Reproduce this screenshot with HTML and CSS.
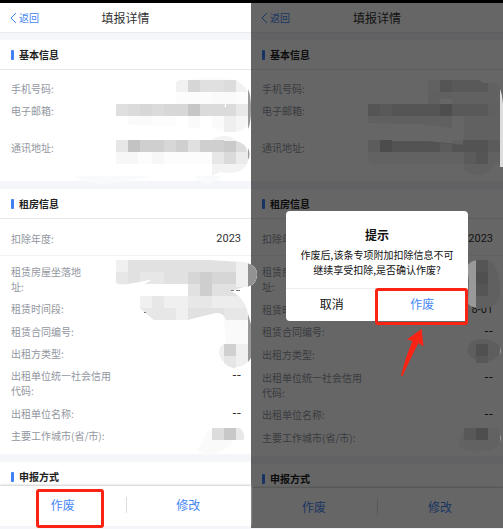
FILE: index.html
```html
<!DOCTYPE html>
<html lang="zh-CN">
<head>
<meta charset="utf-8">
<title>填报详情</title>
<link rel="stylesheet" href="styles.css">
</head>
<body>
<main class="board">
  <section class="phone phone-first">
    <header class="bar">
      <a class="back" href="#"><svg viewBox="0 0 7 12" aria-hidden="true"><path d="M6 1 1 6l5 5"/></svg>返回</a>
      <h1>填报详情</h1>
    </header>
    <section class="card">
      <h2>基本信息</h2>
      <dl class="rows">
        <div class="row"><dt>手机号码:</dt><dd></dd></div>
        <div class="row"><dt>电子邮箱:</dt><dd></dd></div>
        <div class="row row-address"><dt>通讯地址:</dt><dd></dd></div>
      </dl>
    </section>
    <section class="card card-rent">
      <h2>租房信息</h2>
      <dl class="rows rows-year">
        <div class="row"><dt>扣除年度:</dt><dd>2023</dd></div>
      </dl>
      <dl class="rows rows-rent">
        <div class="row"><dt>租赁房屋坐落地<br>址:</dt><dd></dd></div>
        <div class="row"><dt>租赁时间段:</dt><dd></dd></div>
        <div class="row"><dt>租赁合同编号:</dt><dd></dd></div>
        <div class="row"><dt>出租方类型:</dt><dd></dd></div>
        <div class="row"><dt>出租单位统一社会信用<br>代码:</dt><dd class="none">--</dd></div>
        <div class="row"><dt>出租单位名称:</dt><dd class="none">--</dd></div>
        <div class="row"><dt>主要工作城市(省/市):</dt><dd></dd></div>
      </dl>
    </section>
    <section class="card card-cut">
      <h2>申报方式</h2>
    </section>
    <svg class="smudge" viewBox="0 0 251 529" preserveAspectRatio="xMaxYMin meet" aria-hidden="true">
      <defs>
        <clipPath id="c1"><path d="M176 83q1-3 5-3h55l8 6 4 6v92h-72z"/></clipPath>
        <clipPath id="c3"><path d="M116 262q0-2 3-2H210L240 262Q257 263 257 275 256 287 244 287L231 291Q248 300 248 320H226Q224 313 217 313 210 314 188 320H154L140 308V296H188V284H145L153 279 134 283Q124 285 118 284L116 282Z"/></clipPath>
      </defs>
      <path fill="#fcfcfc" d="M176 82q30-8 50-4 16 3 22 14l3 20q0 20-14 20h-20l-7-28h-34zM128 116h48v10l-48-1zM116 152h100v12H116z"/>
      <g clip-path="url(#c1)">
        <path fill="#f1f1f1" d="M176 80h12v12h-12zM236 80h12v12h-12z"/>
        <path fill="#d6d6d6" d="M188 80h12v12h-12z"/><path fill="#e0e0e0" d="M200 80h24v12h-24z"/><path fill="#dcdcdc" d="M224 80h12v12h-12z"/>
      </g>
      <path fill="#fafafa" d="M212 92h24v12h-24zM128 116h24v9l-24-1zM188 116h12v12h-12zM212 116h12v12h-12z"/>
      <path fill="#dfdfdf" d="M116 104h12v12h-12z"/><path fill="#dbdbdb" d="M128 104h12v12h-12zM152 104h12v12h-12zM200 104h36v12h-36z"/><path fill="#d7d7d7" d="M140 104h12v12h-12zM164 104h24v12h-24z"/><path fill="#c6c6c6" d="M188 104h12v12h-12z"/><path fill="#e8e8e8" d="M236 104h12v12h-12z"/>
      <path fill="#efefef" d="M224 116h12v16h-12z"/><path fill="#f5f5f5" d="M236 116h13q-1 12-10 15h-3z"/><path fill="#fff" d="M225 103v3l-2 1h3v-4z"/>
      <path fill="#999" d="M248 89q3 6 3 20t-3 20z"/>
      <path fill="#f3f3f3" d="M212 140q4-4 12-4t13 5q12 4 12 14-1 14-12 17-9 2-17 0l-8 4z"/>
      <path fill="#e7e7e7" d="M116 140h12v12h-12zM212 152h12v12h-12z"/><path fill="#c3c3c3" d="M128 140h12v12h-12z"/><path fill="#cfcfcf" d="M140 140h24v12h-24zM176 140h12v12h-12zM200 140h24v12h-24z"/><path fill="#d7d7d7" d="M164 140h12v12h-12z"/><path fill="#e0e0e0" d="M188 140h12v12h-12z"/><path fill="#cacaca" d="M224 141h12v11h-12z"/><path fill="#dcdcdc" d="M236 141q10 2 11 11h-11z"/><path fill="#dadada" d="M224 152h12v12h-12z"/><path fill="#ebebeb" d="M236 152h12q1 6-1 12h-11z"/>
      <path fill="#f7f7f7" d="M116 152h12v12h-12zM128 152h10v12h-10zM152 152h12v12h-12z"/>
      <path fill="#999" d="M248 148q3 6 0 12z"/>
      <path fill="#f8fafc" d="M77 176h76l-38 7q-30 3-38-7zM195 176h26q-5 8-14 8-8-1-12-8z"/>
      <path fill="#fafafa" d="M236 291q14 20 14 70h-22l-4-41 4-25z"/>
      <g clip-path="url(#c3)">
        <path fill="#e1e1e1" d="M116 260h141v60H116z"/>
        <path fill="#f0f0f0" d="M116 260h12v12h-12zM236 260h21v27h-21zM140 296h12v12h-12zM164 296h24v12h-24zM176 308h12v12h-12z"/>
        <path fill="#e7e7e7" d="M116 272h12v12h-12zM140 272h24v12h-24zM152 296h12v12h-12zM188 296h24v12h-24zM140 308h36v12h-36zM224 308h24v12h-24z"/>
        <path fill="#d6d6d6" d="M188 272h12v12h-12zM212 272h24v12h-24z"/><path fill="#cecece" d="M200 272h12v24h-12z"/><path fill="#ededed" d="M212 296h39v12h-39z"/>
        <path fill="#929292" d="M248 260h9v30h-9z"/>
      </g>
      <path stroke="#777" d="M231 290.500h3m2 0h4m-96 22h2"/>
      <path fill="#999" d="M248 314l3 10v34l-3 4z"/>
      <path fill="#efefef" d="M224 344h24v18q-10 9-22 2-7-5-7-13 1-5 5-7z"/><path fill="#d0d0d0" d="M224 344h12v12h-12z"/><path fill="#e6e6e6" d="M224 356h12v12q-7 0-12-5z"/>
      <path fill="#fafafa" d="M198 450l10-20 28 6q-8 17-30 19z"/><path fill="#dcdcdc" d="M212 428h12v12h-12z"/><path fill="#c8c8c8" d="M224 428h12v12h-12z"/><path fill="#e8e8e8" d="M236 428h4q5 4 4 12h-8z"/>
    </svg>
    <footer class="actions">
      <button type="button" class="marked">作废</button>
      <button type="button">修改</button>
    </footer>
  </section>

  <section class="phone phone-second">
    <header class="bar">
      <a class="back" href="#"><svg viewBox="0 0 7 12" aria-hidden="true"><path d="M6 1 1 6l5 5"/></svg>返回</a>
      <h1>填报详情</h1>
    </header>
    <section class="card">
      <h2>基本信息</h2>
      <dl class="rows">
        <div class="row"><dt>手机号码:</dt><dd></dd></div>
        <div class="row"><dt>电子邮箱:</dt><dd></dd></div>
        <div class="row row-address"><dt>通讯地址:</dt><dd></dd></div>
      </dl>
    </section>
    <section class="card card-rent">
      <h2>租房信息</h2>
      <dl class="rows rows-year">
        <div class="row"><dt>扣除年度:</dt><dd>2023</dd></div>
      </dl>
      <dl class="rows rows-rent">
        <div class="row"><dt>租赁房屋坐落地<br>址:</dt><dd></dd></div>
        <div class="row"><dt>租赁时间段:</dt><dd>8-01</dd></div>
        <div class="row"><dt>租赁合同编号:</dt><dd class="none">--</dd></div>
        <div class="row"><dt>出租方类型:</dt><dd></dd></div>
        <div class="row"><dt>出租单位统一社会信用<br>代码:</dt><dd class="none">--</dd></div>
        <div class="row"><dt>出租单位名称:</dt><dd class="none">--</dd></div>
        <div class="row"><dt>主要工作城市(省/市):</dt><dd></dd></div>
      </dl>
    </section>
    <section class="card card-cut">
      <h2>申报方式</h2>
    </section>
    <footer class="actions">
      <button type="button">作废</button>
      <button type="button">修改</button>
    </footer>
    <div class="mask">
      <svg class="smudge" viewBox="0 0 252 529" preserveAspectRatio="xMaxYMin meet" aria-hidden="true">
        <path fill="#616161" d="M177 80h50l5 3q14-2 18 7l2 14v60h-9q-3 11-16 11-10-1-14-6h-12V92h-24z"/>
        <path fill="#666" d="M201 116h12v24h-12zM201 164h12v8h-12z"/>
        <path fill="#555" d="M189 80h12v12h-12zM117 104h135v12H117z"/><path fill="#595959" d="M201 80h26l5 3h5v9h-36zM129 104h12v12h-12zM201 104h36v12h-36z"/><path fill="#4e4e4e" d="M189 104h12v12h-12z"/><path fill="#606060" d="M177 92h24v7h-12v5h-12zM117 116h84v12l-30-4-54-1zM237 104h15v12h-15z"/>
        <path fill="#5c5c5c" d="M117 140h12v12h-12z"/><path fill="#4c4c4c" d="M129 140h12v12h-12z"/><path fill="#535353" d="M141 141h36l20 2 15 2v-5h25v12h-96z"/><path fill="#5b5b5b" d="M189 143l12 1v8h-12zM237 140h12v12h-12zM213 152h12v12h-12z"/><path fill="#626262" d="M117 152h96v12h-87q-9 0-9-5z"/><path fill="#555" d="M225 152h12v12h-12z"/>
        <path fill="#ddd" d="M249 89q2 4 3 15v63h-3z"/>
        <path fill="#999" d="M216 266q4-6 11-6v48q-9-1-10-5l1-22z"/><path fill="#606060" d="M225 260h12q10 2 12 30 0 14-9 17l-15 2z"/><path fill="#555" d="M225 260h12v36h-12z"/><path fill="#505050" d="M225 272h12v12h-12z"/>
        <path fill="#5e5e5e" d="M216 351q1-10 13-12 14-1 20 8 0 12-11 14-15 4-22-10z"/><path fill="#505050" d="M225 344h12v12h-12z"/><path fill="#585858" d="M225 356h12v7h-12z"/><path fill="#ddd" d="M249 347q1 4 0 8z"/>
        <path fill="#626262" d="M207 444l6-16h33q5 6 2 16-3 7-18 7-17 2-23-7z"/><path fill="#585858" d="M213 428h12v12h-12z"/><path fill="#4e4e4e" d="M225 428h12v12h-12z"/><path fill="#ddd" d="M249 434q1 4 0 8z"/>
      </svg>
      <div class="dialog" role="dialog" aria-labelledby="tip-title">
        <h3 id="tip-title">提示</h3>
        <p>作废后,该条专项附加扣除信息不可<br>继续享受扣除,是否确认作废?</p>
        <div class="choices">
          <button type="button">取消</button>
          <button type="button" class="confirm marked">作废</button>
        </div>
        <svg class="arrow" viewBox="0 0 24 48" aria-hidden="true"><path d="M20.500 0 22.500 17.500 17.500 14Q10 28 1.500 47H0Q4 29 11.500 12L6 10.500z"/></svg>
      </div>
    </div>
  </section>
</main>
</body>
</html>
```

FILE: styles.css
```css
* { box-sizing: border-box; }

body {
  margin: 0;
  background: #fff;
  color: #333;
  font: 10px/15px "Noto Sans CJK SC", sans-serif;
}

h1, h2, h3, p, dl, dd { margin: 0; }

.board {
  display: grid;
  grid-template-columns: 251fr 252fr;
  min-height: 100vh;
}

.phone {
  position: relative;
  display: flex;
  flex-direction: column;
  gap: 8px;
  min-width: 0;
  border-top: 3px solid #000;
  background: #f4f6fa;
}

.phone-first {
  z-index: 1;
  padding-bottom: 3px;
}

.phone-second { padding-bottom: 1px; }

.bar {
  display: grid;
  grid-template-columns: 1fr auto 1fr;
  align-items: center;
  height: 29px;
  padding: 0 10px;
  background: #fff;
  box-shadow: 0 1px #e9eaee;
}

.bar h1 {
  font-size: 12px;
  font-weight: 400;
}

.back {
  display: flex;
  align-items: center;
  gap: 2px;
  color: #4486f4;
  text-decoration: none;
}

.back svg {
  width: 7px;
  height: 12px;
  fill: none;
  stroke: #4486f4;
}

.card { background: #fff; }

.card h2 {
  display: flex;
  align-items: center;
  gap: 5px;
  height: 30px;
  padding-left: 11px;
  border-bottom: 1px solid #e8e8e8;
  color: #222;
  font-size: 10px;
  font-weight: 700;
}

.card h2::before {
  content: "";
  width: 3px;
  height: 10px;
  border-radius: 1px;
  background: #3f80f5;
}

.rows {
  display: flex;
  flex-direction: column;
  gap: 7px;
  padding: 11px 10px 26px 11px;
}

.row {
  display: flex;
  justify-content: space-between;
}

.row dt { color: #9296a0; }

.row dd {
  color: #333;
  font-family: Roboto, "Noto Sans CJK SC", sans-serif;
  font-size: 11px;
}

.row .none {
  font-family: "DejaVu Sans", sans-serif;
  font-size: 12px;
}

.row-address { margin-top: 15px; }

.rows-year {
  padding-top: 12px;
  padding-bottom: 9px;
  border-bottom: 1px solid #f2f2f2;
}

.card-rent,
.rows-rent {
  display: flex;
  flex: 1;
  flex-direction: column;
}

.rows-rent {
  justify-content: space-between;
  gap: 0;
  padding-top: 8px;
  padding-bottom: 11px;
}

.card-cut {
  height: 24px;
  margin-bottom: -8px;
  overflow: hidden;
}

.actions {
  position: relative;
  display: grid;
  grid-template-columns: 1fr 1fr;
  height: 40px;
  background: #fff;
  box-shadow: 0 -1px 2px #ccc;
}

.actions::after {
  content: "";
  position: absolute;
  top: 11px;
  left: 50%;
  height: 16px;
  border-left: 1px solid #ddd;
}

button {
  position: relative;
  padding: 0 0 3px;
  border: 0;
  background: none;
  color: #4486f4;
  font: inherit;
  font-size: 12px;
}

.marked::after {
  content: "";
  position: absolute;
  border: 3px solid #fb2414;
  border-radius: 3px;
}

.actions .marked::after {
  inset: 3px 22px -2px 36px;
}

.smudge {
  position: absolute;
  top: -3px;
  right: 0;
  width: 100%;
  overflow: visible;
  pointer-events: none;
}

.mask {
  position: absolute;
  inset: 0 0 1px;
  display: grid;
  place-items: center;
  background: rgba(0, 0, 0, 0.6);
}

.dialog {
  position: relative;
  width: 72%;
  border-radius: 4px;
  background: #fff;
  color: #111;
  text-align: center;
}

.dialog h3 {
  padding: 16px 0 5px;
  font-size: 12px;
  font-weight: 700;
}

.dialog p { padding-bottom: 11px; }

.choices {
  display: grid;
  grid-template-columns: 1fr 1fr;
  height: 33px;
  border-top: 1px solid #eee;
}

.choices button { color: #111; }

.choices .confirm { color: #4486f4; }

.choices .marked::after { inset: -1px 0 -4px -2px; }

.arrow {
  position: absolute;
  top: calc(100% + 8px);
  left: 63%;
  width: 24px;
  height: 48px;
  fill: #fb2414;
}
```
